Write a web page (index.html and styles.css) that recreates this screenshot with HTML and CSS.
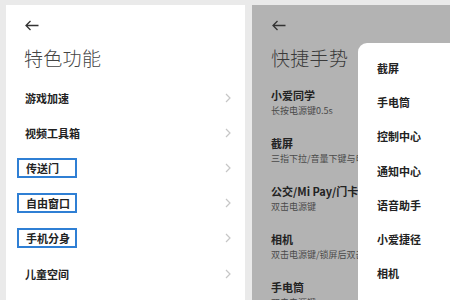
FILE: index.html
```html
<!DOCTYPE html>
<html lang="zh">
<head>
<meta charset="utf-8">
<link rel="stylesheet" href="styles.css">
</head>
<body>
<div class="screen">
  <section class="panel panel-left">
    <div class="back">
      <svg width="14" height="11" viewBox="0 0 14 11"><path d="M13.5 5.5H1M5.5 1L1 5.5L5.5 10" fill="none" stroke="#333" stroke-width="1.3"/></svg>
    </div>
    <h1 class="title">特色功能</h1>
    <ul class="menu">
      <li class="row"><span class="label">游戏加速</span><svg class="chev" width="6" height="10" viewBox="0 0 6 10"><path d="M1 1l4 4-4 4" fill="none" stroke="#c6c6c6" stroke-width="1.2"/></svg></li>
      <li class="row"><span class="label">视频工具箱</span><svg class="chev" width="6" height="10" viewBox="0 0 6 10"><path d="M1 1l4 4-4 4" fill="none" stroke="#c6c6c6" stroke-width="1.2"/></svg></li>
      <li class="row"><span class="label boxed">传送门</span><svg class="chev" width="6" height="10" viewBox="0 0 6 10"><path d="M1 1l4 4-4 4" fill="none" stroke="#c6c6c6" stroke-width="1.2"/></svg></li>
      <li class="row"><span class="label boxed">自由窗口</span><svg class="chev" width="6" height="10" viewBox="0 0 6 10"><path d="M1 1l4 4-4 4" fill="none" stroke="#c6c6c6" stroke-width="1.2"/></svg></li>
      <li class="row"><span class="label boxed">手机分身</span><svg class="chev" width="6" height="10" viewBox="0 0 6 10"><path d="M1 1l4 4-4 4" fill="none" stroke="#c6c6c6" stroke-width="1.2"/></svg></li>
      <li class="row"><span class="label">儿童空间</span><svg class="chev" width="6" height="10" viewBox="0 0 6 10"><path d="M1 1l4 4-4 4" fill="none" stroke="#c6c6c6" stroke-width="1.2"/></svg></li>
    </ul>
  </section>
  <section class="panel panel-right">
    <div class="back">
      <svg width="14" height="11" viewBox="0 0 14 11"><path d="M13.5 5.5H1M5.5 1L1 5.5L5.5 10" fill="none" stroke="#333" stroke-width="1.3"/></svg>
    </div>
    <h1 class="title">快捷手势</h1>
    <ul class="gestures">
      <li class="gesture"><span class="g-main">小爱同学</span><span class="g-sub">长按电源键0.5s</span></li>
      <li class="gesture"><span class="g-main">截屏</span><span class="g-sub">三指下拉/音量下键与电源键</span></li>
      <li class="gesture"><span class="g-main">公交/Mi Pay/门卡</span><span class="g-sub">双击电源键</span></li>
      <li class="gesture"><span class="g-main">相机</span><span class="g-sub">双击电源键/锁屏后双击音量下键</span></li>
      <li class="gesture"><span class="g-main">手电筒</span><span class="g-sub">双击电源键</span></li>
    </ul>
    <ul class="dropdown">
      <li class="opt">截屏</li>
      <li class="opt">手电筒</li>
      <li class="opt">控制中心</li>
      <li class="opt">通知中心</li>
      <li class="opt">语音助手</li>
      <li class="opt">小爱捷径</li>
      <li class="opt">相机</li>
    </ul>
  </section>
</div>
</body>
</html>
```
FILE: styles.css
```css
* { box-sizing: border-box; }
html, body {
  margin: 0;
  padding: 0;
  width: 450px;
  height: 300px;
  overflow: hidden;
  background: #eaeaea;
  font-family: "Noto Sans CJK SC", "Noto Sans", sans-serif;
}
.screen {
  display: flex;
  gap: 7px;
  padding: 5px 0 0 6px;
  height: 300px;
}
.panel {
  height: 295px;
  overflow: hidden;
}
.panel-left {
  width: 239px;
  background: #ffffff;
  padding-left: 18px;
}
.panel-right {
  flex: 1;
  background: #b3b3b3;
  position: relative;
  padding-left: 19px;
}
.back {
  height: 11px;
  margin-top: 15px;
  margin-left: 1px;
  display: flex;
  align-items: center;
}
.back svg { display: block; }
.title {
  margin: 13px 0 0 0;
  font-size: 19px;
  line-height: 28px;
  font-weight: 300;
  color: #444;
  letter-spacing: 0.3px;
}
.panel-right .title { color: #3a3a3a; }
.menu {
  list-style: none;
  margin: 8px 0 0 0;
  padding: 0;
}
.row {
  height: 35.2px;
  display: flex;
  align-items: center;
  justify-content: space-between;
  padding-right: 14px;
}
.label {
  font-size: 11px;
  font-weight: 700;
  color: #222;
  padding-left: 1px;
  line-height: 16px;
}
.boxed {
  display: inline-block;
  width: 60px;
  height: 20px;
  line-height: 16px;
  margin-left: -7px;
  padding-left: 7px;
  border: 2px solid #2f7fd4;
}
.chev { display: block; }
.gestures {
  list-style: none;
  margin: 7px 0 0 0;
  padding: 0;
}
.gesture {
  height: 48px;
  padding-top: 9px;
  display: flex;
  flex-direction: column;
  white-space: nowrap;
}
.g-main {
  font-size: 11px;
  line-height: 15px;
  font-weight: 700;
  color: #222;
}
.g-sub {
  font-size: 9px;
  line-height: 15px;
  color: #4a4a4a;
}
.dropdown {
  position: absolute;
  left: 106px;
  top: 38px;
  right: 0;
  bottom: 0;
  margin: 0;
  padding: 8px 0 0 19px;
  list-style: none;
  background: #ffffff;
  border-top-left-radius: 9px;
}
.opt {
  height: 34.2px;
  display: flex;
  align-items: center;
  font-size: 11px;
  font-weight: 700;
  color: #222;
}
```
